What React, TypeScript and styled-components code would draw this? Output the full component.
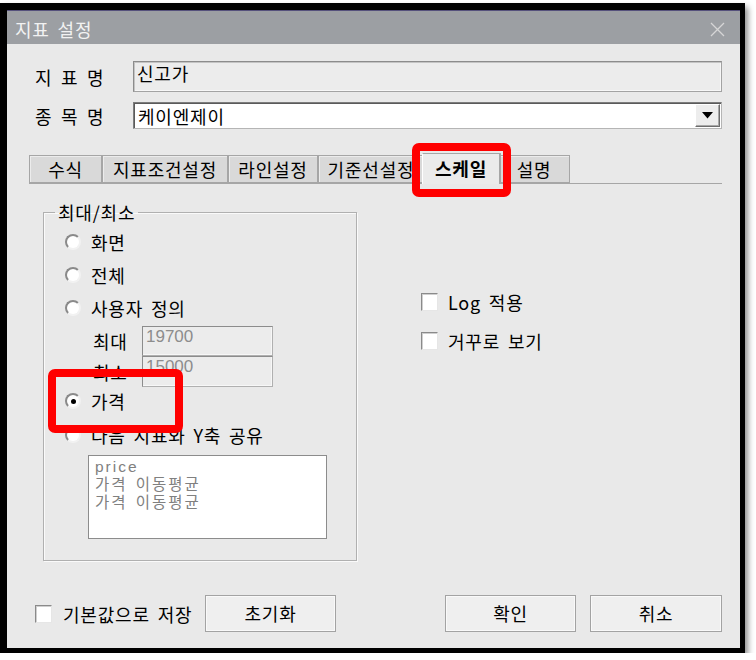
import React from 'react';
import styled, { createGlobalStyle } from 'styled-components';

const GlobalStyle = createGlobalStyle`
  html, body {
    margin: 0;
    padding: 0;
    background: #fff;
  }
  body {
    font-family: "Noto Sans CJK KR", "Noto Sans", sans-serif;
    font-size: 18px;
    letter-spacing: 0.8px;
    word-spacing: 3px;
    color: #000;
  }
  * {
    box-sizing: border-box;
  }
`;

const Window = styled.div`
  position: relative;
  width: 745px;
  height: 650px;
  margin-top: 3px;
  border-style: solid;
  border-color: #000;
  border-width: 7px 5px 5px 7px;
  background: #e9e9e9;
  box-shadow: 3px 4px 6px rgba(0, 0, 0, 0.45);
  display: flex;
  flex-direction: column;
`;

const TitleBar = styled.div`
  flex: none;
  height: 34px;
  background: #9c9fa3;
  border-top: 1px solid #55517c;
  display: flex;
  align-items: center;
  justify-content: space-between;
  padding: 3px 15px 0 8px;
  color: #f2f2f2;
`;

const Body = styled.div`
  flex: 1;
  display: flex;
  flex-direction: column;
  padding: 17px 18px 0 22px;
`;

const FieldRow = styled.div<{ $top?: number }>`
  display: flex;
  align-items: center;
  margin-top: ${({ $top }) => $top ?? 0}px;
`;

const FieldLabel = styled.div`
  width: 104px;
  padding-left: 6px;
  letter-spacing: 1.2px;
`;

const TextBox = styled.div`
  flex: 1;
  height: 31px;
  background: #ececec;
  border: 1px solid #a3a3a3;
  border-top-color: #8c8c8c;
  border-left-color: #8c8c8c;
  box-shadow: inset 1px 1px 0 #c4c4c4, inset -1px -1px 0 #f7f7f7;
  padding: 0 3px;
  line-height: 22px;
`;

const Combo = styled.div`
  flex: 1;
  height: 27px;
  background: #fff;
  border: 1px solid #b5b5b5;
  border-top-color: #7c7c7c;
  border-left-color: #7c7c7c;
  box-shadow: inset 1px 1px 0 #5a5a5a;
  display: flex;
  align-items: center;
  padding-left: 4px;
`;

const DropButton = styled.div`
  margin-left: auto;
  margin-right: 1px;
  width: 25px;
  height: 23px;
  background: #ededed;
  border: 1px solid;
  border-color: #fff #6d6d6d #6d6d6d #fff;
  box-shadow: inset -1px -1px 0 #a8a8a8;
  display: flex;
  align-items: center;
  justify-content: center;
`;

const TabStrip = styled.div`
  margin-top: 24px;
  display: flex;
  align-items: flex-end;
  height: 31px;
  border-bottom: 1px solid #a6a6a6;
`;

const Tab = styled.div<{ $w: number; $active?: boolean }>`
  position: relative;
  width: ${({ $w }) => $w}px;
  height: ${({ $active }) => ($active ? 31 : 28)}px;
  margin-left: ${({ $active }) => ($active ? -2 : 0)}px;
  margin-right: ${({ $active }) => ($active ? -2 : 0)}px;
  margin-bottom: ${({ $active }) => ($active ? -1 : 0)}px;
  z-index: ${({ $active }) => ($active ? 1 : 0)};
  background: ${({ $active }) => ($active ? '#ebebeb' : '#d9d9d9')};
  border: 1px solid #a6a6a6;
  border-bottom: ${({ $active }) => ($active ? 'none' : '1px solid #a6a6a6')};
  border-left-color: ${({ $active }) => ($active ? '#fff' : '#a6a6a6')};
  display: flex;
  align-items: center;
  justify-content: center;
  padding-bottom: ${({ $active }) => ($active ? 3 : 1)}px;
  font-weight: ${({ $active }) => ($active ? 700 : 400)};
  white-space: nowrap;
  overflow: hidden;
  box-shadow: ${({ $active }) => ($active ? '1px 0 0 #a6a6a6' : 'inset 1px 1px 0 #ececec')};
`;

const Panel = styled.div`
  display: flex;
`;

const Group = styled.fieldset`
  margin: 18px 0 0 14px;
  padding: 0;
  width: 314px;
  height: 359px;
  border: 1px solid #b0b0b0;
  box-shadow: 1px 1px 0 #fafafa, inset 1px 1px 0 #fafafa;
`;

const GroupTitle = styled.legend`
  margin-left: 11px;
  padding: 0 3px;
  line-height: 20px;
`;

const RadioRow = styled.div<{ $h: number; $top?: number }>`
  display: flex;
  align-items: center;
  gap: 10px;
  height: ${({ $h }) => $h}px;
  margin-top: ${({ $top }) => $top ?? 0}px;
  padding-left: 21px;
`;

const RadioCircle = styled.span<{ $checked?: boolean }>`
  flex: none;
  width: 16px;
  height: 16px;
  border-radius: 50%;
  background: #fff;
  border: 2px solid;
  border-color: #8a8a8a #f2f2f2 #f2f2f2 #8a8a8a;
  display: flex;
  align-items: center;
  justify-content: center;
  &::after {
    content: '';
    width: 5px;
    height: 5px;
    border-radius: 50%;
    background: #000;
    display: ${({ $checked }) => ($checked ? 'block' : 'none')};
  }
`;

const ValueRow = styled.div<{ $top?: number }>`
  display: flex;
  align-items: center;
  padding-left: 49px;
  margin-top: ${({ $top }) => $top ?? 0}px;
`;

const ValueLabel = styled.div`
  width: 49px;
`;

const ValueBox = styled.div<{ $h: number }>`
  width: 131px;
  height: ${({ $h }) => $h}px;
  background: #ececec;
  border: 1px solid #8c8c8c;
  border-right-color: #b0b0b0;
  border-bottom-color: #b0b0b0;
  box-shadow: inset -1px -1px 0 #f7f7f7;
  padding: 0 3px;
  font-family: "Liberation Sans", Arial, sans-serif;
  font-size: 17px;
  letter-spacing: 0;
  line-height: 19px;
  color: #8d8d8d;
`;

const ListBox = styled.div`
  margin: 1px 0 0 44px;
  width: 239px;
  height: 84px;
  background: #fff;
  border: 1px solid #8c8c8c;
  padding: 2px 6px;
  font-family: "Liberation Sans", "Noto Sans CJK KR", sans-serif;
  font-size: 15.5px;
  letter-spacing: 2px;
  word-spacing: 2px;
  line-height: 18px;
  color: #808080;
`;

const Options = styled.div`
  margin: 98px 0 0 64px;
  display: flex;
  flex-direction: column;
`;

const CheckRow = styled.label`
  display: flex;
  align-items: center;
  gap: 10px;
  height: 39px;
`;

const CheckBox = styled.span`
  flex: none;
  width: 17px;
  height: 18px;
  background: #fff;
  border: 1px solid;
  border-color: #8a8a8a #e6e6e6 #e6e6e6 #8a8a8a;
  box-shadow: inset 1px 1px 0 #cfcfcf;
`;

const Footer = styled.div`
  margin-top: 34px;
  display: flex;
  align-items: center;
  padding-left: 6px;
  height: 37px;
`;

const FooterCheck = styled(CheckRow)`
  width: 170px;
  gap: 11px;
  white-space: nowrap;
`;

const Button = styled.button<{ $w: number; $push?: boolean }>`
  width: ${({ $w }) => $w}px;
  height: 37px;
  margin-left: ${({ $push }) => ($push ? 'auto' : '0')};
  background: #efefef;
  border: 1px solid #a3a3a3;
  box-shadow: inset 0 0 0 1px #f9f9f9;
  font: inherit;
  letter-spacing: inherit;
  color: #000;
  padding: 0 0 2px;
`;

const Mark = styled.div<{ $x: number; $y: number; $w: number; $h: number }>`
  position: absolute;
  left: ${({ $x }) => $x}px;
  top: ${({ $y }) => $y}px;
  width: ${({ $w }) => $w}px;
  height: ${({ $h }) => $h}px;
  border: 8px solid #ff0000;
  border-radius: 7px;
  pointer-events: none;
  z-index: 5;
`;

const tabs = [
  { label: '수식', w: 73 },
  { label: '지표조건설정', w: 126 },
  { label: '라인설정', w: 90 },
  { label: '기준선설정', w: 106 },
  { label: '스케일', w: 78, active: true },
  { label: '설명', w: 72 },
];

const App: React.FC = () => {
  return (
    <>
      <GlobalStyle />
      <Window>
        <TitleBar>
          <span>지표 설정</span>
          <svg width="15" height="15" viewBox="0 0 15 15">
            <path d="M1 1 L14 14 M14 1 L1 14" stroke="#d6d6d6" strokeWidth="1.3" />
          </svg>
        </TitleBar>
        <Body>
          <FieldRow>
            <FieldLabel>지 표 명</FieldLabel>
            <TextBox>신고가</TextBox>
          </FieldRow>
          <FieldRow $top={10}>
            <FieldLabel>종 목 명</FieldLabel>
            <Combo>
              케이엔제이
              <DropButton>
                <svg width="11" height="7" viewBox="0 0 11 7">
                  <path d="M0 0 H11 L5.5 6.5 Z" fill="#000" />
                </svg>
              </DropButton>
            </Combo>
          </FieldRow>

          <TabStrip>
            {tabs.map((t) => (
              <Tab key={t.label} $w={t.w} $active={t.active}>
                {t.label}
              </Tab>
            ))}
          </TabStrip>

          <Panel>
            <Group>
              <GroupTitle>최대/최소</GroupTitle>
              <RadioRow $h={33} $top={3}>
                <RadioCircle />
                화면
              </RadioRow>
              <RadioRow $h={33}>
                <RadioCircle />
                전체
              </RadioRow>
              <RadioRow $h={33}>
                <RadioCircle />
                사용자 정의
              </RadioRow>
              <ValueRow $top={2}>
                <ValueLabel>최대</ValueLabel>
                <ValueBox $h={30}>19700</ValueBox>
              </ValueRow>
              <ValueRow>
                <ValueLabel>최소</ValueLabel>
                <ValueBox $h={31}>15000</ValueBox>
              </ValueRow>
              <RadioRow $h={28}>
                <RadioCircle $checked />
                가격
              </RadioRow>
              <RadioRow $h={39}>
                <RadioCircle />
                다음 지표와 Y축 공유
              </RadioRow>
              <ListBox>
                <div>price</div>
                <div>가격 이동평균</div>
                <div>가격 이동평균</div>
              </ListBox>
            </Group>
            <Options>
              <CheckRow>
                <CheckBox />
                Log 적용
              </CheckRow>
              <CheckRow>
                <CheckBox />
                거꾸로 보기
              </CheckRow>
            </Options>
          </Panel>

          <Footer>
            <FooterCheck>
              <CheckBox />
              기본값으로 저장
            </FooterCheck>
            <Button $w={131}>초기화</Button>
            <Button $w={131} $push>
              확인
            </Button>
            <Button $w={132} style={{ marginLeft: 14 }}>
              취소
            </Button>
          </Footer>
        </Body>
        <Mark $x={405} $y={133} $w={99} $h={54} />
        <Mark $x={41} $y={359} $w={135} $h={64} />
      </Window>
    </>
  );
};

export default App;
